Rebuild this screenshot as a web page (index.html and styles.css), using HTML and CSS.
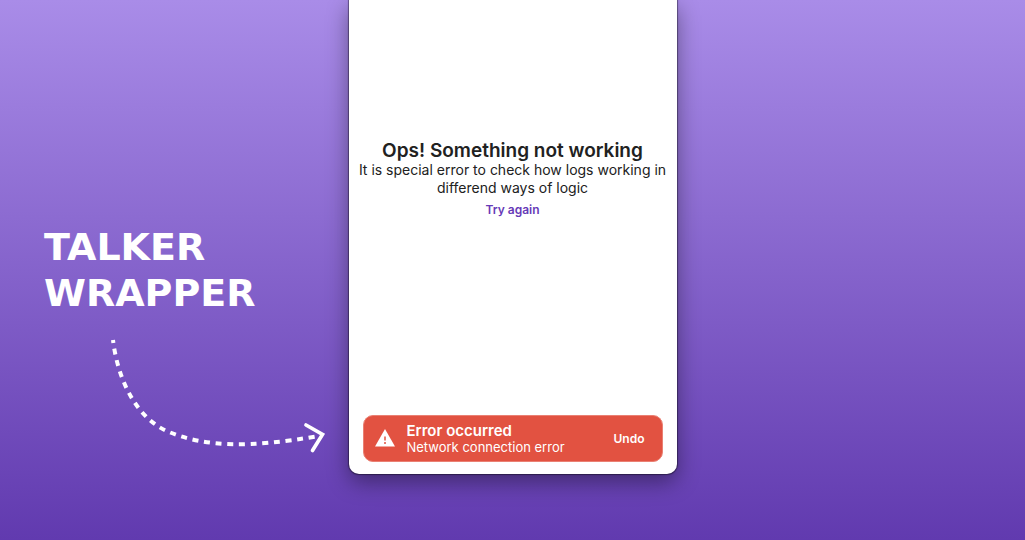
FILE: index.html
```html
<!DOCTYPE html>
<html lang="en">
<head>
<meta charset="utf-8">
<meta name="viewport" content="width=device-width, initial-scale=1">
<title>Talker Wrapper</title>
<link rel="stylesheet" href="styles.css">
</head>
<body>
<main class="promo">
  <section class="caption">
    <h1 class="caption-title">TALKER<br>WRAPPER</h1>
    <svg class="arrow" viewBox="0 0 220 120" width="220" height="120" fill="none" stroke="#fff" aria-hidden="true">
      <path d="M5 4C10 45 29 83 61 96C97 111 141 112 211 100" stroke-width="4" stroke-dasharray="6 5.7" stroke-dashoffset="3"/>
      <path d="M198 89L214.500 98.500L204.500 114.500" stroke-width="3.700" stroke-linecap="round"/>
    </svg>
  </section>
  <section class="phone">
    <div class="message">
      <h2 class="message-title">Ops! Something not working</h2>
      <p class="message-text">It is special error to check how logs working in differend ways of logic</p>
      <button class="retry" type="button">Try again</button>
    </div>
    <div class="snackbar" role="alert">
      <svg class="warning" viewBox="0 0 22 20" width="22" height="20" aria-hidden="true">
        <path d="M11 0L21 17.500H1Z" fill="#fff"/>
        <path d="M11 7.500V11.500M11 13V15" stroke="#e25241" stroke-width="1.500"/>
      </svg>
      <div class="snackbar-body">
        <strong class="snackbar-title">Error occurred</strong>
        <span class="snackbar-text">Network connection error</span>
      </div>
      <button class="undo" type="button">Undo</button>
    </div>
  </section>
</main>
</body>
</html>
```
FILE: styles.css
```css
* {
  box-sizing: border-box;
}

body {
  margin: 0;
  font-family: Inter, "Liberation Sans", sans-serif;
}

h1, h2, p {
  margin: 0;
}

button {
  padding: 0;
  border: 0;
  background: none;
  font-family: inherit;
  cursor: pointer;
}

.promo {
  display: grid;
  grid-template-columns: 1fr 328px 1fr;
  min-height: 100vh;
  padding-bottom: 66px;
  overflow: hidden;
  background: linear-gradient(#a98ce8, #613aaf);
}

.caption {
  padding: 224px 0 0 44px;
  color: #fff;
}

.caption-title {
  font: bold 38px/46px "DejaVu Sans", sans-serif;
}

.arrow {
  display: block;
  margin: 20px 0 0 64px;
}

.phone {
  display: flex;
  flex-direction: column;
  justify-content: space-between;
  padding: 141px 0 12px;
  border-radius: 0 0 10px 10px;
  background: #fff;
  box-shadow: 0 0 1px 1px rgba(0, 0, 0, 0.4), 0 8px 22px rgba(0, 0, 0, 0.4);
}

.message {
  display: flex;
  flex-direction: column;
  align-items: center;
  padding: 0 4px;
  color: #212121;
  text-align: center;
}

.message-title {
  font-size: 19px;
  font-weight: 600;
  line-height: 20px;
}

.message-text {
  font-size: 14px;
  line-height: 18px;
}

.retry {
  margin-top: 4px;
  color: #673ab7;
  font-size: 12px;
  font-weight: 600;
  line-height: 18px;
}

.snackbar {
  display: flex;
  align-items: center;
  margin: 0 14px;
  padding: 6px 17px 6px 10px;
  border: 1px solid #ea8073;
  border-radius: 10px;
  background: #e25241;
  color: #fff;
}

.snackbar-body {
  display: flex;
  flex: 1;
  flex-direction: column;
  margin-left: 11px;
}

.snackbar-title {
  font-size: 15px;
  font-weight: 600;
  line-height: 17px;
}

.snackbar-text {
  font-size: 13px;
  line-height: 16px;
}

.undo {
  color: #fff;
  font-size: 12px;
  font-weight: 600;
}
```
